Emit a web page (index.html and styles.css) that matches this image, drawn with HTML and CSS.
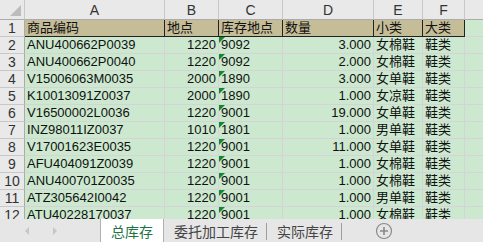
FILE: index.html
```html
<!DOCTYPE html>
<html lang="zh-CN">
<head>
    <meta charset="UTF-8">
    <title>总库存</title>
    <link rel="stylesheet" href="styles.css">
</head>
<body>
    <div class="sheet">
        <table class="grid">
            <colgroup>
                <col class="c-row">
                <col class="c-a">
                <col class="c-b">
                <col class="c-c">
                <col class="c-d">
                <col class="c-e">
                <col class="c-f">
                <col class="c-g">
            </colgroup>
            <tr class="col-head">
                <th class="corner"><span class="select-all"></span></th>
                <th>A</th><th>B</th><th>C</th><th>D</th><th>E</th><th>F</th><th></th>
            </tr>
            <tr class="title-row">
                <th class="row-num">1</th>
                <td class="title">商品编码</td>
                <td class="title">地点</td>
                <td class="title">库存地点</td>
                <td class="title">数量</td>
                <td class="title">小类</td>
                <td class="title">大类</td>
                <td></td>
            </tr>
            <tr>
                <th class="row-num">2</th>
                <td>ANU400662P0039</td><td class="num">1220</td><td class="txt">9092</td><td class="num">3.000</td><td>女棉鞋</td><td>鞋类</td><td></td>
            </tr>
            <tr>
                <th class="row-num">3</th>
                <td>ANU400662P0040</td><td class="num">1220</td><td class="txt">9092</td><td class="num">2.000</td><td>女棉鞋</td><td>鞋类</td><td></td>
            </tr>
            <tr>
                <th class="row-num">4</th>
                <td>V15006063M0035</td><td class="num">2000</td><td class="txt">1890</td><td class="num">3.000</td><td>女单鞋</td><td>鞋类</td><td></td>
            </tr>
            <tr>
                <th class="row-num">5</th>
                <td>K10013091Z0037</td><td class="num">2000</td><td class="txt">1890</td><td class="num">1.000</td><td>女凉鞋</td><td>鞋类</td><td></td>
            </tr>
            <tr>
                <th class="row-num">6</th>
                <td>V16500002L0036</td><td class="num">1220</td><td class="txt">9001</td><td class="num">19.000</td><td>女单鞋</td><td>鞋类</td><td></td>
            </tr>
            <tr>
                <th class="row-num">7</th>
                <td>INZ98011IZ0037</td><td class="num">1010</td><td class="txt">1801</td><td class="num">1.000</td><td>男单鞋</td><td>鞋类</td><td></td>
            </tr>
            <tr>
                <th class="row-num">8</th>
                <td>V17001623E0035</td><td class="num">1220</td><td class="txt">9001</td><td class="num">11.000</td><td>女单鞋</td><td>鞋类</td><td></td>
            </tr>
            <tr>
                <th class="row-num">9</th>
                <td>AFU404091Z0039</td><td class="num">1220</td><td class="txt">9001</td><td class="num">1.000</td><td>女棉鞋</td><td>鞋类</td><td></td>
            </tr>
            <tr>
                <th class="row-num">10</th>
                <td>ANU400701Z0035</td><td class="num">1220</td><td class="txt">9001</td><td class="num">1.000</td><td>女棉鞋</td><td>鞋类</td><td></td>
            </tr>
            <tr>
                <th class="row-num">11</th>
                <td>ATZ305642I0042</td><td class="num">1220</td><td class="txt">9001</td><td class="num">1.000</td><td>男单鞋</td><td>鞋类</td><td></td>
            </tr>
            <tr>
                <th class="row-num">12</th>
                <td>ATU40228170037</td><td class="num">1220</td><td class="txt">9001</td><td class="num">1.000</td><td>女棉鞋</td><td>鞋类</td><td></td>
            </tr>
        </table>
    </div>

    <div class="tab-bar">
        <div class="tab-nav">
            <span class="arrow left"></span>
            <span class="arrow right"></span>
        </div>
        <div class="sheet-tab active">总库存</div>
        <div class="sheet-tab">委托加工库存</div>
        <div class="sheet-tab">实际库存</div>
        <div class="add-sheet">
            <svg width="18" height="18" viewBox="0 0 18 18">
                <circle cx="9" cy="9" r="7.5" fill="none" stroke="#8a8a8a" stroke-width="1.2"/>
                <path d="M9 5v8M5 9h8" stroke="#8a8a8a" stroke-width="1.6"/>
            </svg>
        </div>
    </div>
</body>
</html>
```

FILE: styles.css
```css
body {
    margin: 0;
    width: 483px;
    height: 242px;
    overflow: hidden;
    background: #cce8cf;
    font-family: "Liberation Sans", Arial, "Noto Sans CJK SC", sans-serif;
    color: #111;
}
.sheet {
    height: 219px;
    overflow: hidden;
}
.grid {
    table-layout: fixed;
    border-collapse: separate;
    border-spacing: 0;
    width: 504px;
    font-size: 13px;
}
.c-row { width: 25px; }
.c-a { width: 140px; }
.c-b { width: 54px; }
.c-c { width: 64px; }
.c-d { width: 91px; }
.c-e { width: 49px; }
.c-f { width: 42px; }
.c-g { width: 39px; }

.grid th, .grid td {
    box-sizing: border-box;
    height: 17px;
    padding: 0 2px;
    line-height: 16px;
    white-space: nowrap;
    overflow: hidden;
    border-right: 1px solid #d6d3d8;
    border-bottom: 1px solid #d6d3d8;
    font-weight: normal;
    text-align: left;
    vertical-align: middle;
}
.col-head th {
    height: 20px;
    background: #e9e9e9;
    color: #333;
    font-size: 14px;
    text-align: center;
    border-right: 1px solid #c8c8c8;
    border-bottom: 1px solid #ababab;
}
.corner {
    position: relative;
}
.select-all {
    position: absolute;
    right: 3px;
    bottom: 3px;
    width: 0;
    height: 0;
    border-left: 11px solid transparent;
    border-bottom: 11px solid #bcbcbc;
}
.grid .row-num {
    background: #e9e9e9;
    color: #333;
    font-size: 14px;
    text-align: center;
    padding: 0;
    border-right: 1px solid #ababab;
    border-bottom: 1px solid #c8c8c8;
}
.grid .title {
    background: #c4bd97;
    border-right: 1px solid #222;
    border-bottom: 1px solid #222;
}
.grid .num {
    text-align: right;
}
.grid .txt {
    position: relative;
}
.grid .txt::before {
    content: "";
    position: absolute;
    left: 0;
    top: 0;
    border-top: 6px solid #0e8a2e;
    border-right: 6px solid transparent;
}
.tab-bar {
    display: flex;
    align-items: stretch;
    height: 23px;
    background: #e6e6e6;
    font-family: "Noto Sans CJK SC", sans-serif;
    font-size: 14px;
    color: #444;
}
.tab-nav {
    width: 100px;
    display: flex;
    align-items: center;
    padding-left: 25px;
    box-sizing: border-box;
    gap: 24px;
}
.arrow {
    width: 0;
    height: 0;
    border-top: 4px solid transparent;
    border-bottom: 4px solid transparent;
}
.arrow.left {
    border-right: 4px solid #c6c6c6;
}
.arrow.right {
    border-left: 4px solid #c6c6c6;
}
.sheet-tab {
    display: flex;
    align-items: center;
    padding: 0 9px 0 10px;
    line-height: 1;
    position: relative;
}
.sheet-tab:not(.active)::after {
    content: "";
    position: absolute;
    right: 0;
    top: 4px;
    bottom: 2px;
    border-right: 1px solid #9e9e9e;
}
.sheet-tab.active {
    background: #fff;
    color: #217346;
    padding: 0 10px;
    border-left: 1px solid #b0b0b0;
    border-right: 1px solid #b0b0b0;
}
.add-sheet {
    display: flex;
    align-items: center;
    padding-left: 33px;
}
```
